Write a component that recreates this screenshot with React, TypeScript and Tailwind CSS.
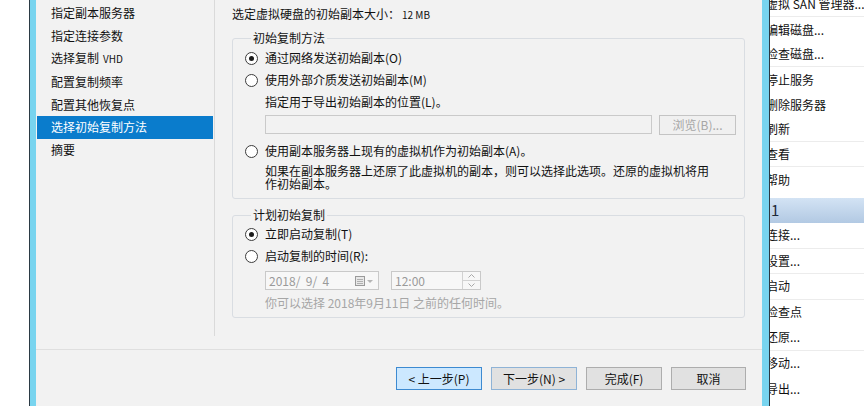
import React from 'react';

const font = "font-['Noto_Sans_CJK_SC','Noto_Sans',sans-serif]";

const navItems = [
  { label: '指定副本服务器' },
  { label: '指定连接参数' },
  { label: '选择复制', suffix: 'VHD' },
  { label: '配置复制频率' },
  { label: '配置其他恢复点' },
  { label: '选择初始复制方法', active: true },
  { label: '摘要' },
];

const actionsTop = [
  { label: '虚拟 SAN 管理器...', line: true },
  { label: '编辑磁盘...' },
  { label: '检查磁盘...', line: true },
  { label: '停止服务' },
  { label: '删除服务器' },
  { label: '刷新', line: true },
  { label: '查看', line: true },
  { label: '帮助' },
];

const actionsVm = [
  { label: '连接...', line: true },
  { label: '设置...', line: true },
  { label: '启动', line: true },
  { label: '检查点' },
  { label: '还原...', line: true },
  { label: '移动...' },
  { label: '导出...' },
];

const Radio = ({ checked }: { checked?: boolean }) => (
  <span className="w-[13px] h-[13px] rounded-full border border-[#3c3c3c] bg-white flex items-center justify-center shrink-0">
    {checked && <span className="w-[5px] h-[5px] rounded-full bg-[#1b1b1b]" />}
  </span>
);

const RadioRow = ({ checked, children }: { checked?: boolean; children: React.ReactNode }) => (
  <div className="h-[22px] flex items-center gap-[7px]">
    <Radio checked={checked} />
    <span className="text-[12px] leading-[16px] text-[#111]">{children}</span>
  </div>
);

const Btn = ({ children, w, primary, focus }: { children: React.ReactNode; w: string; primary?: boolean; focus?: boolean }) => (
  <button
    className={`${w} h-[23px] text-[12px] leading-[16px] text-[#111] flex items-center justify-center border ${
      primary ? 'bg-[#cce8ff] border-[#3d8ad1]' : focus ? 'bg-[#e1e1e1] border-[#8fb3d6]' : 'bg-[#e1e1e1] border-[#adadad]'
    }`}
  >
    {children}
  </button>
);

export default function App() {
  return (
    <div className={`w-[864px] h-[406px] overflow-hidden flex bg-white ${font}`}>
      <div className="w-[29px] bg-white" />
      <div className="w-[1px] bg-[#2b3a44]" />
      <div className="w-[6px] bg-[#78d4ef]" />

      {/* wizard dialog */}
      <div className="w-[726px] bg-[#f2f2f2] flex flex-col">
        <div className="h-[336px] flex">
          <div className="w-[178px] flex flex-col pt-[2px] pl-[1px] pr-[1px]">
            {navItems.map((n, i) => (
              <div
                key={i}
                className={`h-[22.8px] flex items-center ${n.active ? 'bg-[#0a7ccc] text-white' : 'text-[#111]'}`}
              >
                <span className={`pl-[14px] text-[12px] leading-[16px] ${n.active ? 'h-[18px] flex items-center' : ''}`}>
                  {n.label}
                  {n.suffix && <span className="ml-[4px] text-[10px]">{n.suffix}</span>}
                </span>
              </div>
            ))}
          </div>
          <div className="w-[1px] bg-[#dadada]" />

          <div className="flex-1 pl-[17px] pr-[16px] pt-[6px]">
            <div className="h-[16px] text-[12px] leading-[16px] text-[#111]">
              选定虚拟硬盘的初始副本大小：<span className="ml-[2px] text-[10px]">12 MB</span>
            </div>

            <fieldset className="mt-[8px] w-[513px] h-[169px] border border-[#d9dde2] rounded-[3px] pl-[12px] pr-[8px]">
              <legend className="ml-[6px] px-[2px] text-[12px] leading-[16px] text-[#111]">初始复制方法</legend>
              <div className="mt-[1px]">
                <RadioRow checked>通过网络发送初始副本(O)</RadioRow>
                <RadioRow>使用外部介质发送初始副本(M)</RadioRow>
                <div className="h-[22px] flex items-center pl-[20px] text-[12px] leading-[16px] text-[#111]">
                  指定用于导出初始副本的位置(L)。
                </div>
                <div className="mt-[2px] pl-[20px] flex gap-[7px]">
                  <div className="w-[387px] h-[19px] border border-[#cacaca] bg-[#f2f2f2]" />
                  <div className="w-[77px] h-[20px] border border-[#c4c4c4] bg-[#f0f0f0] flex items-center justify-center text-[12px] text-[#a6a6a6]">
                    浏览(B)...
                  </div>
                </div>
                <div className="mt-[5px]">
                  <RadioRow>使用副本服务器上现有的虚拟机作为初始副本(A)。</RadioRow>
                </div>
                <div className="ml-[20px] pt-[2px] text-[12px] leading-[13px] text-[#111] w-[452px]">
                  如果在副本服务器上还原了此虚拟机的副本，则可以选择此选项。还原的虚拟机将用作初始副本。
                </div>
              </div>
            </fieldset>

            <fieldset className="mt-[8px] w-[513px] h-[111px] border border-[#d9dde2] rounded-[3px] pl-[12px] pr-[8px]">
              <legend className="ml-[6px] px-[2px] text-[12px] leading-[16px] text-[#111]">计划初始复制</legend>
              <RadioRow checked>立即启动复制(T)</RadioRow>
              <RadioRow>启动复制的时间(R):</RadioRow>
              <div className="mt-[4px] pl-[20px] flex gap-[12px]">
                <div className="w-[114px] h-[19px] border border-[#c9c9c9] bg-[#f7f7f7] flex items-center pl-[3px] pr-[5px] text-[12px] text-[#9a9a9a]">
                  <span className="flex-1">2018/&nbsp;&nbsp;9/&nbsp;&nbsp;4</span>
                  <svg width="18" height="10" viewBox="0 0 18 10">
                    <rect x="0.5" y="0.5" width="9" height="9" fill="#e8e8e8" stroke="#9a9a9a" />
                    <path d="M2 3.5h6M2 5.5h6M2 7.5h6" stroke="#b0b0b0" />
                    <path d="M12 4l3 3 3-3z" fill="#b5b5b5" />
                  </svg>
                </div>
                <div className="w-[90px] h-[19px] border border-[#c9c9c9] bg-[#f7f7f7] flex items-center pl-[3px] text-[12px] text-[#9a9a9a]">
                  <span className="flex-1">12:00</span>
                  <div className="w-[18px] h-[17px] border-l border-[#d2d2d2] flex flex-col">
                    <div className="flex-1 flex items-center justify-center border-b border-[#d2d2d2]">
                      <svg width="7" height="4" viewBox="0 0 7 4"><path d="M0.5 3.5l3-3 3 3" fill="none" stroke="#a8a8a8" /></svg>
                    </div>
                    <div className="flex-1 flex items-center justify-center">
                      <svg width="7" height="4" viewBox="0 0 7 4"><path d="M0.5 0.5l3 3 3-3" fill="none" stroke="#a8a8a8" /></svg>
                    </div>
                  </div>
                </div>
              </div>
              <div className="mt-[3px] pl-[20px] h-[20px] flex items-center text-[12px] text-[#a6a6a6]">
                你可以选择 2018年9月11日 之前的任何时间。
              </div>
            </fieldset>
          </div>
        </div>

        <div className="h-[13px]" />
        <div className="h-[1px] bg-[#dfdfdf]" />
        <div className="flex justify-end gap-[9px] pr-[16px] pt-[17px]">
          <Btn w="w-[86px]" primary>&lt; 上一步(P)</Btn>
          <Btn w="w-[86px]" focus>下一步(N) &gt;</Btn>
          <Btn w="w-[76px]">完成(F)</Btn>
          <Btn w="w-[75px]">取消</Btn>
        </div>
      </div>

      <div className="w-[7px] bg-[#78d4ef]" />
      <div className="w-[1px] bg-[#2b3a44]" />

      {/* actions pane */}
      <div className="flex-1 bg-white overflow-hidden">
        <div className="-ml-[4px] mt-[-8px]">
          {actionsTop.map((a, i) => (
            <div
              key={i}
              className={`h-[25px] flex items-center text-[12px] leading-[16px] text-[#111] whitespace-nowrap ${a.line ? 'border-b border-[#ececec]' : ''}`}
            >
              {a.label}
            </div>
          ))}
          <div className="h-[6px]" />
          <div className="h-[25px] ml-[4px] bg-gradient-to-b from-[#d3e3f4] to-[#b2c9e3] flex items-center pl-[1px] text-[15px] text-[#1e2a38]">
            1
          </div>
          {actionsVm.map((a, i) => (
            <div
              key={i}
              className={`h-[25.5px] flex items-center text-[12px] leading-[16px] text-[#111] whitespace-nowrap ${a.line ? 'border-b border-[#ececec]' : ''}`}
            >
              {a.label}
            </div>
          ))}
        </div>
      </div>
    </div>
  );
}
